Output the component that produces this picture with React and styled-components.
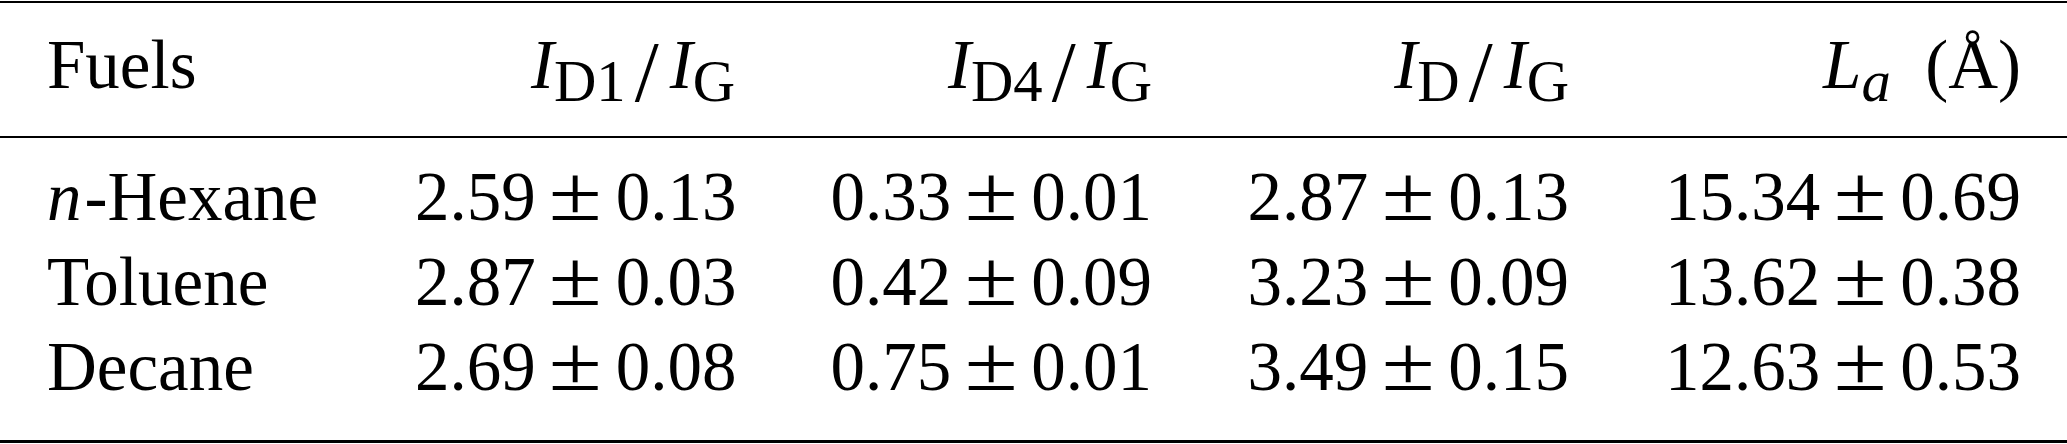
import React from "react";
import styled, { createGlobalStyle } from "styled-components";

const GlobalStyle = createGlobalStyle`
  html, body {
    margin: 0;
    padding: 0;
    background: #ffffff;
  }
  body {
    font-family: "Liberation Serif", "Times New Roman", serif;
    color: #000000;
  }
`;

const Table = styled.div`
  width: 2067px;
  box-sizing: border-box;
  padding: 1px 0;
  background: #ffffff;
`;

const Head = styled.div`
  border-top: 2px solid #000;
  border-bottom: 2px solid #000;
  padding: 20px 0 28px;
`;

const Body = styled.div`
  border-bottom: 3px solid #000;
  padding: 17px 0 30px;
`;

const Row = styled.div`
  display: grid;
  grid-template-columns: 368px 320px 417px 417px 452px;
  padding: 0 46px 0 47px;
  height: 85px;
  font-size: 69px;
  line-height: 85px;
`;

const Cell = styled.div`
  text-align: ${(p) => (p.$left ? "left" : "right")};
  white-space: nowrap;
`;

const Var = styled.i`
  font-style: italic;
  margin-right: ${(p) => p.$gap || "0"};
`;

const Sub = styled.span`
  font-size: 0.85em;
  line-height: 0;
  vertical-align: -13px;
  font-style: ${(p) => (p.$italic ? "italic" : "normal")};
`;

const Slash = styled.span`
  font-size: 1.25em;
  line-height: 0;
  vertical-align: -12.5px;
  margin: 0 11px 0 9px;
`;

const Unit = styled.span`
  margin-left: 0.5em;
`;

const PlusMinus = styled.span`
  display: inline-block;
  width: 1.16em;
  text-align: center;
  line-height: 0;
`;

const PmGlyph = styled.span`
  display: inline-block;
  font-size: 1.126em;
  transform: scaleX(1.243);
`;

const Value = ({ v, e }) => (
  <>
    {v}
    <PlusMinus>
      <PmGlyph>±</PmGlyph>
    </PlusMinus>
    {e}
  </>
);

const Ratio = ({ num }) => (
  <>
    <Var>I</Var>
    <Sub>{num}</Sub>
    <Slash>/</Slash>
    <Var>I</Var>
    <Sub>G</Sub>
  </>
);

const rows = [
  {
    fuel: (
      <>
        <Var $gap="3px">n</Var>-Hexane
      </>
    ),
    values: [
      ["2.59", "0.13"],
      ["0.33", "0.01"],
      ["2.87", "0.13"],
      ["15.34", "0.69"],
    ],
  },
  {
    fuel: "Toluene",
    values: [
      ["2.87", "0.03"],
      ["0.42", "0.09"],
      ["3.23", "0.09"],
      ["13.62", "0.38"],
    ],
  },
  {
    fuel: "Decane",
    values: [
      ["2.69", "0.08"],
      ["0.75", "0.01"],
      ["3.49", "0.15"],
      ["12.63", "0.53"],
    ],
  },
];

export default function App() {
  return (
    <>
      <GlobalStyle />
      <Table>
        <Head>
          <Row>
            <Cell $left>Fuels</Cell>
            <Cell>
              <Ratio num="D1" />
            </Cell>
            <Cell>
              <Ratio num="D4" />
            </Cell>
            <Cell>
              <Ratio num="D" />
            </Cell>
            <Cell>
              <Var>L</Var>
              <Sub $italic>a</Sub>
              <Unit>(Å)</Unit>
            </Cell>
          </Row>
        </Head>
        <Body>
          {rows.map((r, i) => (
            <Row key={i}>
              <Cell $left>{r.fuel}</Cell>
              {r.values.map(([v, e], j) => (
                <Cell key={j}>
                  <Value v={v} e={e} />
                </Cell>
              ))}
            </Row>
          ))}
        </Body>
      </Table>
    </>
  );
}
